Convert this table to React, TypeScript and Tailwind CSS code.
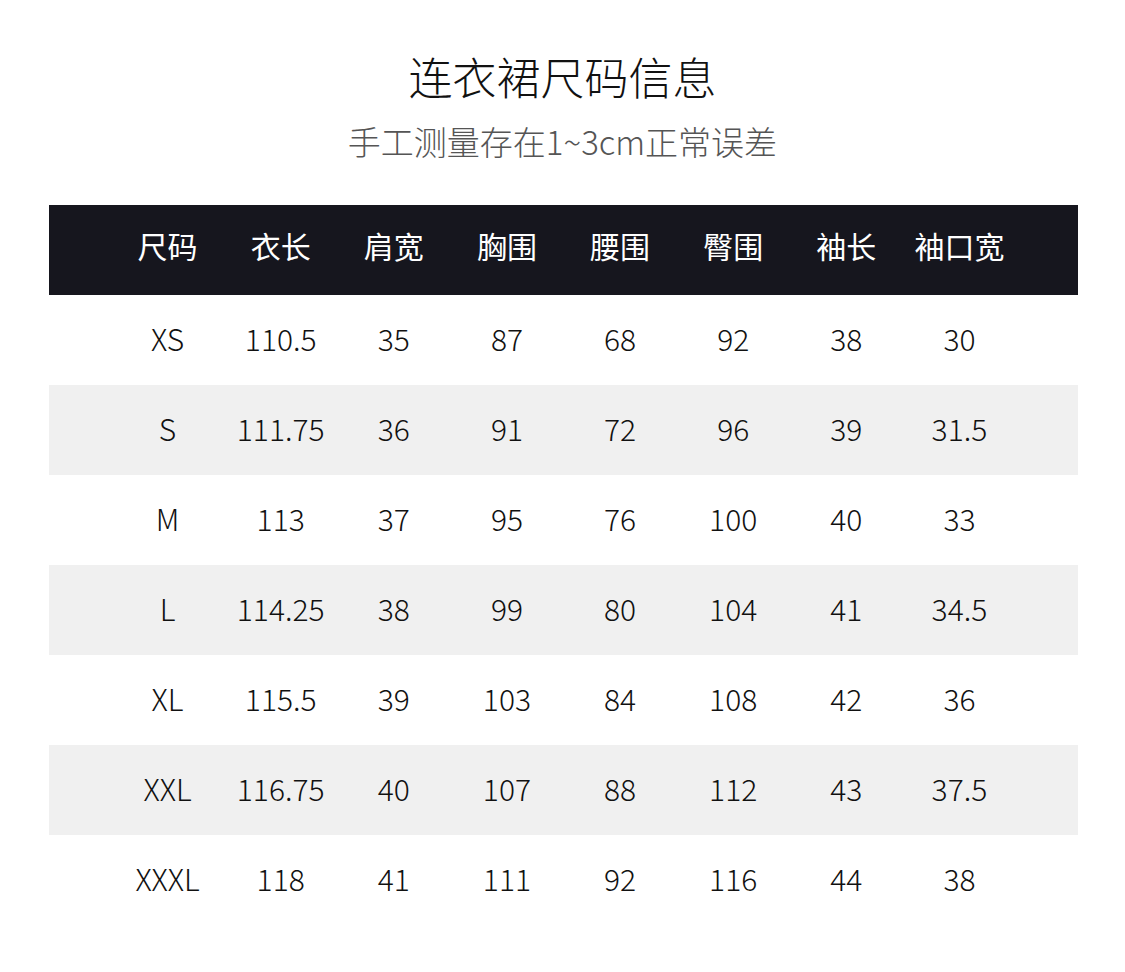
const headers = ["尺码", "衣长", "肩宽", "胸围", "腰围", "臀围", "袖长", "袖口宽"];

const rows = [
  ["XS", "110.5", "35", "87", "68", "92", "38", "30"],
  ["S", "111.75", "36", "91", "72", "96", "39", "31.5"],
  ["M", "113", "37", "95", "76", "100", "40", "33"],
  ["L", "114.25", "38", "99", "80", "104", "41", "34.5"],
  ["XL", "115.5", "39", "103", "84", "108", "42", "36"],
  ["XXL", "116.75", "40", "107", "88", "112", "43", "37.5"],
  ["XXXL", "118", "41", "111", "92", "116", "44", "38"],
];

export default function App() {
  return (
    <div
      className="w-[1125px] h-[972px] bg-white flex flex-col items-center"
      style={{ fontFamily: '"Noto Sans CJK SC", "Noto Sans", sans-serif' }}
    >
      {/* Title */}
      <h1 className="mt-[47px] text-[44px] leading-[58px] font-light text-[#111111]">连衣裙尺码信息</h1>
      <p className="mt-[16px] text-[33px] leading-[40px] font-light text-[#555555]">手工测量存在1~3cm正常误差</p>

      {/* Table */}
      <div className="mt-[44px] w-[1029px] ml-[2px]">
        <div className="h-[90px] bg-[#16161e] grid grid-cols-8 px-[62px] pb-[10px] items-center">
          {headers.map((h) => (
            <div key={h} className="text-center text-[30px] leading-[40px] text-white">
              {h}
            </div>
          ))}
        </div>
        {rows.map((r, i) => (
          <div
            key={r[0]}
            className={
              "h-[90px] grid grid-cols-8 px-[62px] pb-[4px] items-center " +
              (i % 2 === 1 ? "bg-[#f0f0f0]" : "bg-white")
            }
          >
            {r.map((c, j) => (
              <div key={j} className="text-center text-[30px] leading-[40px] font-light text-[#111111]">
                {c}
              </div>
            ))}
          </div>
        ))}
      </div>
    </div>
  );
}
